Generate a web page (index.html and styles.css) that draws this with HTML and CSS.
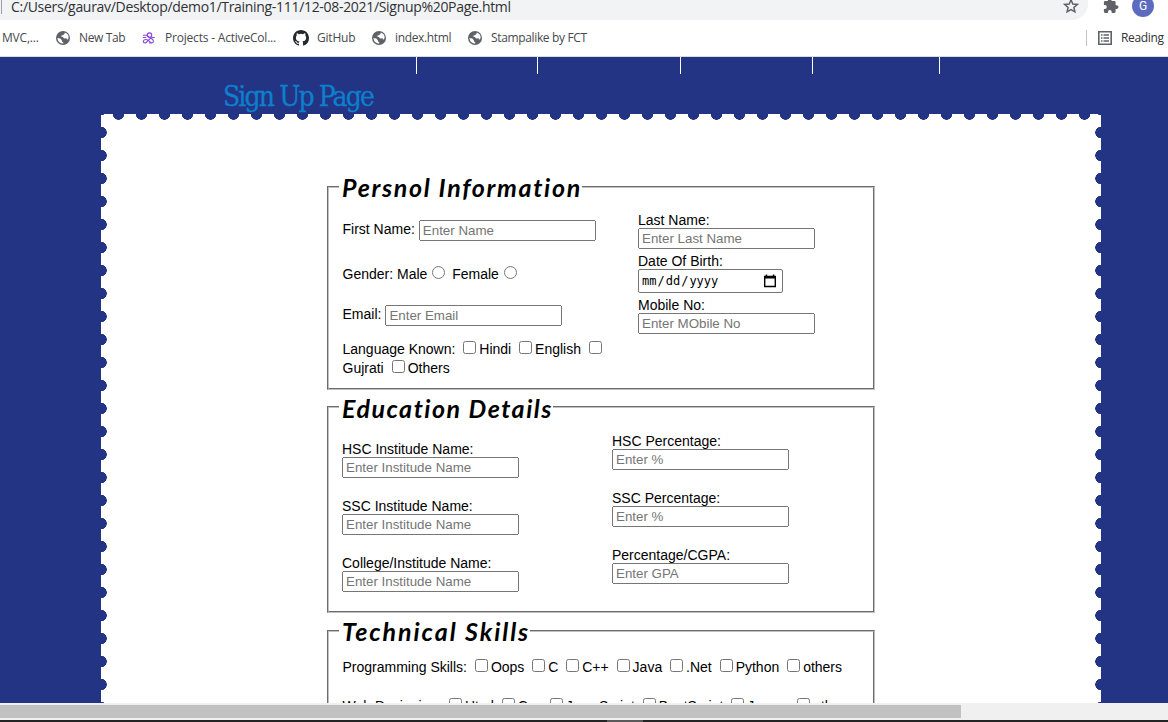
FILE: index.html
```html
<!DOCTYPE html>
<html lang="en">
<head>
<meta charset="utf-8">
<title>Signup Page</title>
<link rel="stylesheet" href="styles.css">
</head>
<body>
<svg class="defs" width="0" height="0">
  <symbol id="globe" viewBox="0 0 14 14"><circle cx="7" cy="7" r="7" fill="#5f6368"/><path d="M1.500 7 4.300 7.600 6 9.500v1l1.300 1v1C4 12.500 1.500 10.300 1.500 7zM8.600 1.700v1L7 4.200 5.400 4.400v1.400l1.600.2 1 1.500 2.200-.3 1.600 1.600c1-1.500 1.100-3.400.3-4.800-.6-1.200-1.900-2.100-3.500-2.300z" fill="#fff"/></symbol>
</svg>
<div class="toolbar">
  <div class="omnibox"><span class="divider"></span><span class="url">C:/Users/gaurav/Desktop/demo1/Training-111/12-08-2021/Signup%20Page.html</span>
    <svg class="star" width="16" height="16" viewBox="0 0 16 16"><path d="M8 1.800 9.800 6l4.500.4-3.400 3 1 4.400L8 11.500l-3.900 2.300 1-4.400-3.400-3L6.200 6z" fill="none" stroke="#5f6368" stroke-width="1.500"/></svg>
  </div>
  <svg class="puzzle" width="16" height="16" viewBox="0 0 16 16"><path d="M13.700 7.300h-1.100V4.500c0-.8-.6-1.400-1.400-1.400H8.500V2a1.800 1.800 0 0 0-3.600 0v1.100H2.200C1.400 3.100.9 3.700.9 4.500v2.600h1a1.900 1.900 0 0 1 0 3.800h-1v2.700c0 .8.6 1.400 1.300 1.400h2.700v-1.100a1.900 1.900 0 0 1 3.800 0V15h2.500c.8 0 1.400-.6 1.400-1.400v-2.700h1.100a1.800 1.800 0 0 0 0-3.600z" fill="#5f6368"/></svg>
  <span class="avatar">G</span>
</div>
<div class="bookmarks">
  <span class="mark mvc">MVC,...</span>
  <span class="mark newtab"><svg width="14" height="14"><use href="#globe"/></svg>New Tab</span>
  <span class="mark projects"><svg width="14" height="14" viewBox="0 0 14 14"><g fill="none" stroke="#8b45dc" stroke-width="1.150"><circle cx="7.500" cy="4" r="2.200"/><path d="M1 4.200h3c1.500 0 2.200 1.500 3.500 2.300l2.600 1.600c2 1.300 1.500 3.800-.3 3.800-2 0-3-3.400-5.800-3.400-3.200 0-3.400 3.400-1 3.400C5.500 11.900 7 7 10 6.500h2.800M.8 6.500h3.500M7 12h3"/></g></svg>Projects - ActiveCol...</span>
  <span class="mark github"><svg width="16" height="16" viewBox="0 0 16 16"><path fill="#24292e" d="M8 0C3.580 0 0 3.580 0 8c0 3.540 2.290 6.530 5.470 7.590.4.070.55-.17.55-.38 0-.19-.01-.82-.01-1.490-2.010.37-2.530-.49-2.690-.94-.09-.23-.48-.94-.82-1.130-.28-.15-.68-.52-.01-.53.63-.01 1.080.58 1.230.82.72 1.210 1.870.87 2.330.66.070-.52.28-.87.51-1.070-1.780-.2-3.640-.89-3.640-3.950 0-.87.31-1.590.82-2.150-.08-.2-.36-1.020.08-2.120 0 0 .67-.21 2.200.82a7.600 7.600 0 0 1 4 0c1.530-1.040 2.200-.82 2.200-.82.44 1.100.16 1.920.08 2.120.51.56.82 1.270.82 2.150 0 3.070-1.870 3.750-3.650 3.950.29.25.54.73.54 1.480 0 1.070-.01 1.930-.01 2.200 0 .21.15.46.55.38A8.010 8.010 0 0 0 16 8c0-4.420-3.580-8-8-8z"/></svg>GitHub</span>
  <span class="mark index"><svg width="14" height="14"><use href="#globe"/></svg>index.html</span>
  <span class="mark stamp"><svg width="14" height="14"><use href="#globe"/></svg>Stampalike by FCT</span>
  <span class="reading"><svg width="14" height="14" viewBox="0 0 14 14"><path d="M.8.8h12.400v12.400H.8z" fill="none" stroke="#5f6368" stroke-width="1.600"/><path d="M3 4h1.500M3 7h1.500M3 10h1.500M5.500 4H11M5.500 7H11M5.500 10H11" stroke="#5f6368" stroke-width="1.400"/></svg>Reading</span>
</div>
<main class="page">
  <nav class="nav"><i class="n1"></i><i class="n2"></i><i class="n3"></i><i class="n4"></i><i class="n5"></i></nav>
  <h1 class="title">Sign Up Page</h1>
  <form class="stamp-sheet">
    <fieldset class="personal">
      <legend>Persnol Information</legend>
      <div class="cols">
        <div class="left">
          <div class="line first">First Name: <input type="text" placeholder="Enter Name"></div>
          <div class="checks gender">Gender: Male<input type="radio"> Female<input type="radio"></div>
          <div class="line email">Email: <input type="text" placeholder="Enter Email"></div>
          <div class="checks langs">Language Known: <input type="checkbox">Hindi <input type="checkbox">English <input type="checkbox"></div>
          <div class="checks">Gujrati <input type="checkbox">Others</div>
        </div>
        <div class="stack">
          <label>Last Name:<input type="text" placeholder="Enter Last Name"></label>
          <label>Date Of Birth:<span class="date">mm<b>/</b>dd<b>/</b>yyyy<svg width="14" height="14" viewBox="0 0 14 14"><path d="M1.700 2.500h10.600v10H1.700z" fill="none" stroke="#000" stroke-width="1.400"/><path d="M1 2h12v2.500H1zM2.700.5h1.500V2H2.700zM9.800.5h1.500V2H9.800z"/></svg></span></label>
          <label>Mobile No:<input type="text" placeholder="Enter MObile No"></label>
        </div>
      </div>
    </fieldset>
    <fieldset class="education">
      <legend>Education Details</legend>
      <div class="cols">
        <div class="stack low">
          <label>HSC Institude Name:<input type="text" placeholder="Enter Institude Name"></label>
          <label>SSC Institude Name:<input type="text" placeholder="Enter Institude Name"></label>
          <label>College/Institude Name:<input type="text" placeholder="Enter Institude Name"></label>
        </div>
        <div class="stack">
          <label>HSC Percentage:<input type="text" placeholder="Enter %"></label>
          <label>SSC Percentage:<input type="text" placeholder="Enter %"></label>
          <label>Percentage/CGPA:<input type="text" placeholder="Enter GPA"></label>
        </div>
      </div>
    </fieldset>
    <fieldset class="skills">
      <legend>Technical Skills</legend>
      <div class="checks skill">Programming Skills: <input type="checkbox">Oops <input type="checkbox">C <input type="checkbox">C++ <input type="checkbox">Java <input type="checkbox">.Net <input type="checkbox">Python <input type="checkbox">others</div>
      <div class="checks skill">Web Designing: <input type="checkbox">Html <input type="checkbox">Css <input type="checkbox">Java Script <input type="checkbox">BootScript <input type="checkbox">Jquery <input type="checkbox">others</div>
    </fieldset>
  </form>
</main>
<div class="scrollbar"><div class="thumb"></div></div>
<div class="taskbar"><div class="active"></div></div>
</body>
</html>
```
FILE: styles.css
```css
* { box-sizing: border-box; }
html, body { height: 722px; overflow: hidden; }
body { margin: 0; display: flex; flex-direction: column; background: #fff; font: 14px/16px "Liberation Sans", Arial, sans-serif; color: #000; }
.defs { position: absolute; }
svg { flex: none; display: block; }

.toolbar { height: 20px; flex: none; display: flex; overflow: hidden; }
.omnibox { width: 1088px; height: 20px; background: #f1f3f4; border-radius: 0 0 16px 0; display: flex; font: 14px/14px "Open Sans", "Noto Sans", sans-serif; color: #303134; }
.divider { width: 1px; height: 14px; margin-left: 1px; background: #9aa0a6; }
.url { margin-left: 9px; width: 1053px; white-space: nowrap; letter-spacing: -0.31px; line-height: 13px; }
.star { margin-left: -1px; margin-top: -2px; }
.puzzle { margin: -2px 0 0 15px; }
.avatar { width: 22px; height: 22px; margin: -5px 0 0 13px; border-radius: 50%; background: #5c6bc0; color: #fff; text-align: center; font: 12px/22px Roboto, sans-serif; }

.bookmarks { height: 37px; flex: none; display: flex; align-items: center; border-bottom: 1px solid #dadce0; font: 12px/16px "Open Sans", "Noto Sans", sans-serif; letter-spacing: -0.2px; color: #46494d; white-space: nowrap; }
.mark { display: flex; align-items: center; gap: 9px; }
.mvc { width: 54px; padding-left: 2px; }
.newtab { width: 86px; padding-left: 2px; }
.newtab, .index, .stamp, .reading { letter-spacing: -0.35px; }
.projects { width: 153px; padding-left: 2px; }
.github { width: 79px; gap: 8px; }
.index { width: 96px; }
.stamp { width: 618px; }
.reading { display: flex; align-items: center; gap: 9px; height: 16px; padding-left: 11px; border-left: 1px solid #bdc1c6; color: #303134; }

.page { flex: 1; min-height: 0; overflow: hidden; background: #233484; }
.nav { height: 17px; display: flex; }
.nav i { border-right: 1px solid #fff; }
.n1 { width: 417px; }
.n2 { width: 121px; }
.n3 { width: 143px; }
.n4 { width: 132px; }
.n5 { width: 127px; }
.title { margin: 0 0 0 223px; height: 40px; font: 28px/46px "DejaVu Serif Condensed", "DejaVu Serif", serif; letter-spacing: -1.900px; -webkit-text-stroke: 0.3px #0d7fcc; color: #0d7fcc; white-space: nowrap; }

.stamp-sheet {
  width: 1000px; height: 640px; margin-left: 101px; padding: 59px 226px 0;
  background:
    radial-gradient(circle at 17.5px 0, #233484 5.500px, transparent 6px) 0 0 / 23px 7px repeat-x,
    radial-gradient(circle at 0 11.500px, #233484 5.500px, transparent 6px) 0 7px / 7px 23px repeat-y,
    radial-gradient(circle at 7px 11.500px, #233484 5.500px, transparent 6px) 100% 7px / 7px 23px repeat-y,
    #fff;
}
fieldset { width: 548px; margin: 0; padding: 0 10px; border: 2px groove #c0c0c0; }
legend { height: 28px; padding: 0 1px 0 3px; font: italic 700 25px/29px Lato, sans-serif; white-space: nowrap; }
.personal { height: 217px; margin-bottom: 3px; }
.education { height: 220px; margin-bottom: 4px; }
.skills { height: 200px; }
.personal legend { width: 243px; letter-spacing: 1.680px; }
.education legend { width: 214px; letter-spacing: 1.500px; line-height: 30px; }
.skills legend { width: 191px; letter-spacing: 1.950px; }
.cols { display: grid; padding-left: 3px; }
.personal .cols { grid-template-columns: 296px 1fr; padding-top: 11px; }
.education .cols { grid-template-columns: 270px 1fr; padding-top: 12px; }

input[type="text"] { width: 177px; height: 21px; margin: 0; font: 13.333px "Liberation Sans", Arial, sans-serif; }
input::placeholder { color: #757575; }
.left { white-space: nowrap; padding-left: 0.5px; }
.line { display: flex; gap: 4px; align-items: flex-start; height: 21px; line-height: 19px; }
.first { margin-top: 8px; }
.checks { height: 19px; line-height: 19px; white-space: nowrap; }
.gender { margin: 22px 0 23px; }
.langs { margin-top: 12px; }
.stack { display: flex; flex-direction: column; gap: 4px; }
.stack label { display: flex; flex-direction: column; align-items: flex-start; }
.education .stack { gap: 20px; }
.low { padding-top: 8px; }
.date { width: 145px; height: 24px; padding: 0 5px 0 3px; display: flex; align-items: center; border: 1px solid #767676; border-radius: 2px; font: 12px/20px "DejaVu Sans Mono", monospace; }
.date b { font-weight: 400; padding: 0 1px; }
.date svg { margin-left: auto; }
.skill { margin: 11px 0 20px 3.5px; }

.scrollbar { height: 17px; flex: none; padding: 2px 0; background: #f0f0f0; }
.thumb { width: 961px; height: 13px; background: #c1c1c1; }
.taskbar { height: 2px; flex: none; background: #242424; }
.active { width: 36px; height: 2px; margin-left: 607px; background: #5a5a5a; }
```
